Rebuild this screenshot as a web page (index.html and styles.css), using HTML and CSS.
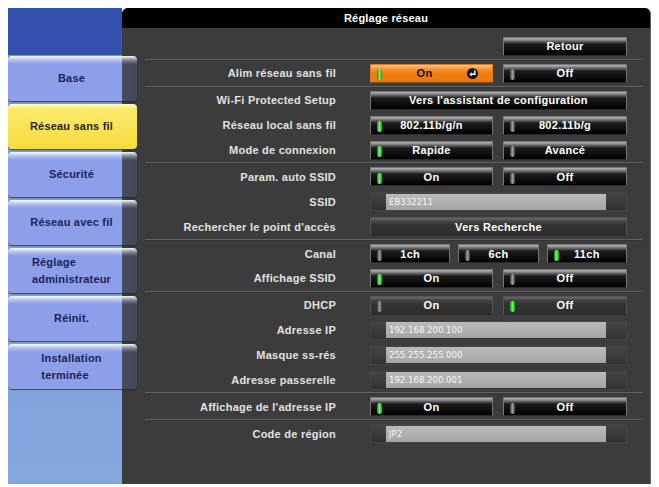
FILE: index.html
```html
<!DOCTYPE html>
<html lang="fr">
<head>
<meta charset="utf-8">
<title>Réglage réseau</title>
<link rel="stylesheet" href="styles.css">
</head>
<body>
<div class="screen">
  <nav class="sidebar">
    <div class="tab"><span class="t">Base</span></div>
    <div class="tab active"><span class="t">Réseau sans fil</span></div>
    <div class="tab"><span class="t">Sécurité</span></div>
    <div class="tab"><span class="t">Réseau avec fil</span></div>
    <div class="tab"><span class="t">Réglage<br>administrateur</span></div>
    <div class="tab"><span class="t">Réinit.</span></div>
    <div class="tab"><span class="t">Installation<br>terminée</span></div>
  </nav>
  <main class="panel">
    <div class="head">Réglage réseau</div>
    <div class="body">
      <div class="row"><div class="label"></div>
        <div class="pair"><div></div><div class="btn"><span class="txt">Retour</span></div></div></div>
      <div class="sep"></div>
      <div class="row"><div class="label">Alim réseau sans fil</div>
        <div class="pair">
          <div class="btn sel"><span class="led on"></span><span class="txt">On</span>
            <svg class="ret" width="11" height="11" viewBox="0 0 11 11"><circle cx="5.5" cy="5.5" r="5.5" fill="#141414"/><path d="M7.8 2.6V6.3H4.4" fill="none" stroke="#fff" stroke-width="1.5"/><polygon points="2.3,6.3 4.8,4.2 4.8,8.4" fill="#fff"/></svg>
          </div>
          <div class="btn"><span class="led"></span><span class="txt">Off</span></div>
        </div></div>
      <div class="sep"></div>
      <div class="row"><div class="label">Wi-Fi Protected Setup</div>
        <div class="btn"><span class="txt">Vers l'assistant de configuration</span></div></div>
      <div class="row"><div class="label">Réseau local sans fil</div>
        <div class="pair">
          <div class="btn"><span class="led on"></span><span class="txt">802.11b/g/n</span></div>
          <div class="btn"><span class="led"></span><span class="txt">802.11b/g</span></div>
        </div></div>
      <div class="row"><div class="label">Mode de connexion</div>
        <div class="pair">
          <div class="btn"><span class="led on"></span><span class="txt">Rapide</span></div>
          <div class="btn"><span class="led"></span><span class="txt">Avancé</span></div>
        </div></div>
      <div class="sep"></div>
      <div class="row"><div class="label">Param. auto SSID</div>
        <div class="pair">
          <div class="btn"><span class="led on"></span><span class="txt">On</span></div>
          <div class="btn"><span class="led"></span><span class="txt">Off</span></div>
        </div></div>
      <div class="row"><div class="label">SSID</div>
        <div class="field"><span class="val">EB332211</span></div></div>
      <div class="row"><div class="label">Rechercher le point d'accès</div>
        <div class="btn dim"><span class="txt">Vers Recherche</span></div></div>
      <div class="sep"></div>
      <div class="row"><div class="label">Canal</div>
        <div class="triple">
          <div class="btn"><span class="led"></span><span class="txt">1ch</span></div>
          <div class="btn"><span class="led"></span><span class="txt">6ch</span></div>
          <div class="btn"><span class="led on"></span><span class="txt">11ch</span></div>
        </div></div>
      <div class="row"><div class="label">Affichage SSID</div>
        <div class="pair">
          <div class="btn"><span class="led on"></span><span class="txt">On</span></div>
          <div class="btn"><span class="led"></span><span class="txt">Off</span></div>
        </div></div>
      <div class="sep"></div>
      <div class="row"><div class="label">DHCP</div>
        <div class="pair">
          <div class="btn dim"><span class="led"></span><span class="txt">On</span></div>
          <div class="btn dim"><span class="led on"></span><span class="txt">Off</span></div>
        </div></div>
      <div class="row"><div class="label">Adresse IP</div>
        <div class="field"><span class="val">192.168.200.100</span></div></div>
      <div class="row"><div class="label">Masque ss-rés</div>
        <div class="field"><span class="val">255.255.255.000</span></div></div>
      <div class="row"><div class="label">Adresse passerelle</div>
        <div class="field"><span class="val">192.168.200.001</span></div></div>
      <div class="sep"></div>
      <div class="row"><div class="label">Affichage de l'adresse IP</div>
        <div class="pair">
          <div class="btn"><span class="led on"></span><span class="txt">On</span></div>
          <div class="btn"><span class="led"></span><span class="txt">Off</span></div>
        </div></div>
      <div class="sep"></div>
      <div class="row"><div class="label">Code de région</div>
        <div class="field"><span class="val">JP2</span></div></div>
    </div>
  </main>
</div>
</body>
</html>
```
FILE: styles.css
```css
body {
  margin: 8px;
  background: #fff;
  font-family: "Liberation Sans", Arial, sans-serif;
}
.screen {
  display: flex;
  width: 643px;
  height: 476px;
}
.sidebar {
  width: 114px;
  flex: none;
  box-sizing: border-box;
  padding-top: 48px;
  display: flex;
  flex-direction: column;
  gap: 3px;
  position: relative;
  z-index: 1;
  background: linear-gradient(to bottom, #3352ad 0, #3352ad 47px, #7696d1 47px, #84a7de 100%);
}
.tab {
  width: 129px;
  height: 45px;
  flex: none;
  box-sizing: border-box;
  padding-right: 2px;
  border-radius: 4px;
  display: flex;
  align-items: center;
  justify-content: center;
  color: #1b2459;
  font-weight: bold;
  font-size: 11px;
  letter-spacing: 0.2px;
  background:
    linear-gradient(to bottom, rgba(255,255,255,0.95) 0, rgba(255,255,255,0.35) 4px, rgba(255,255,255,0) 8px),
    linear-gradient(to right, #8d9fe8 0, #8d9fe8 114px, #484c60 114px, #44485a 100%);
  box-shadow: 0 1px 1px rgba(20, 28, 70, 0.7);
}
.tab.active {
  color: #2a2300;
  background: linear-gradient(to bottom, #fffbd0 0, #fbe96a 5px, #f7dc3e 100%);
  box-shadow: 0 1px 1px rgba(60, 50, 0, 0.7);
}
.tab .t {
  text-align: left;
  line-height: 17px;
}
.panel {
  flex: 1;
  background: #3c3c3c;
  border-right: 1px solid #606060;
  border-radius: 6px 6px 0 0;
  overflow: hidden;
}
.head {
  height: 20px;
  background: #000;
  color: #fff;
  font-weight: bold;
  font-size: 11px;
  letter-spacing: 0.2px;
  display: flex;
  align-items: center;
  justify-content: center;
}
.body {
  padding-top: 6px;
}
.row {
  display: grid;
  grid-template-columns: 214px 257px;
  column-gap: 34px;
  align-items: center;
  height: 24.9px;
}
.label {
  text-align: right;
  color: #e2e2e2;
  font-weight: bold;
  font-size: 11px;
  letter-spacing: 0.25px;
  white-space: nowrap;
}
.sep {
  height: 2px;
  margin-left: 23px;
  width: 498px;
  background: linear-gradient(to bottom, #626262 0, #626262 1px, #363636 1px);
}
.pair {
  display: grid;
  grid-template-columns: 123px 124px;
  column-gap: 10px;
}
.triple {
  display: grid;
  grid-template-columns: repeat(3, 1fr);
  column-gap: 8px;
}
.btn {
  height: 19px;
  box-sizing: border-box;
  border: 1px solid #767676;
  border-bottom-color: #2a2a2a;
  border-radius: 1px;
  background: linear-gradient(to bottom, #b8b8b8 0, #6e6e6e 3px, #1c1c1c 6px, #000 100%);
  color: #fff;
  font-weight: bold;
  font-size: 11px;
  letter-spacing: 0.3px;
  display: flex;
  align-items: center;
  padding: 0 6px;
}
.btn .txt {
  flex: 1;
  text-align: center;
  white-space: nowrap;
}
.btn .led + .txt {
  margin-right: 5px;
}
.btn.sel {
  border-color: #d77a22;
  border-bottom-color: #8a4a10;
  color: #1a0d00;
  background: linear-gradient(to bottom, #ffc88a 0, #f79431 4px, #ef7d13 8px, #ec7710 100%);
}
.btn.sel .txt {
  margin-right: 0;
}
.ret {
  flex: none;
  margin-right: 8px;
}
.btn.dim {
  border-color: #555;
  border-bottom-color: #2c2c2c;
  background: linear-gradient(to bottom, #6a6a6a 0, #474747 3px, #333 7px, #2e2e2e 100%);
}
.led {
  flex: none;
  width: 5px;
  height: 11px;
  margin-top: 3px;
  border-radius: 3px;
  background: linear-gradient(to right, #3a3a3a 0, #9c9c9c 50%, #404040 100%);
}
.led.on {
  background: linear-gradient(to right, #168c16 0, #62ff5a 50%, #1a9a1a 100%);
}
.field {
  height: 19px;
  box-sizing: border-box;
  padding-left: 15px;
  display: flex;
  align-items: center;
  border: 1px solid #444;
  background: linear-gradient(to bottom, #454545 0, #323232 100%);
}
.field .val {
  width: 220px;
  height: 16px;
  box-sizing: border-box;
  padding-left: 3px;
  line-height: 16px;
  color: #f6f6f6;
  font-family: "DejaVu Sans Condensed", "DejaVu Sans", sans-serif;
  font-stretch: condensed;
  font-size: 9.5px;
  background: linear-gradient(to bottom, #bababa 0, #a4a4a4 100%);
}
```
